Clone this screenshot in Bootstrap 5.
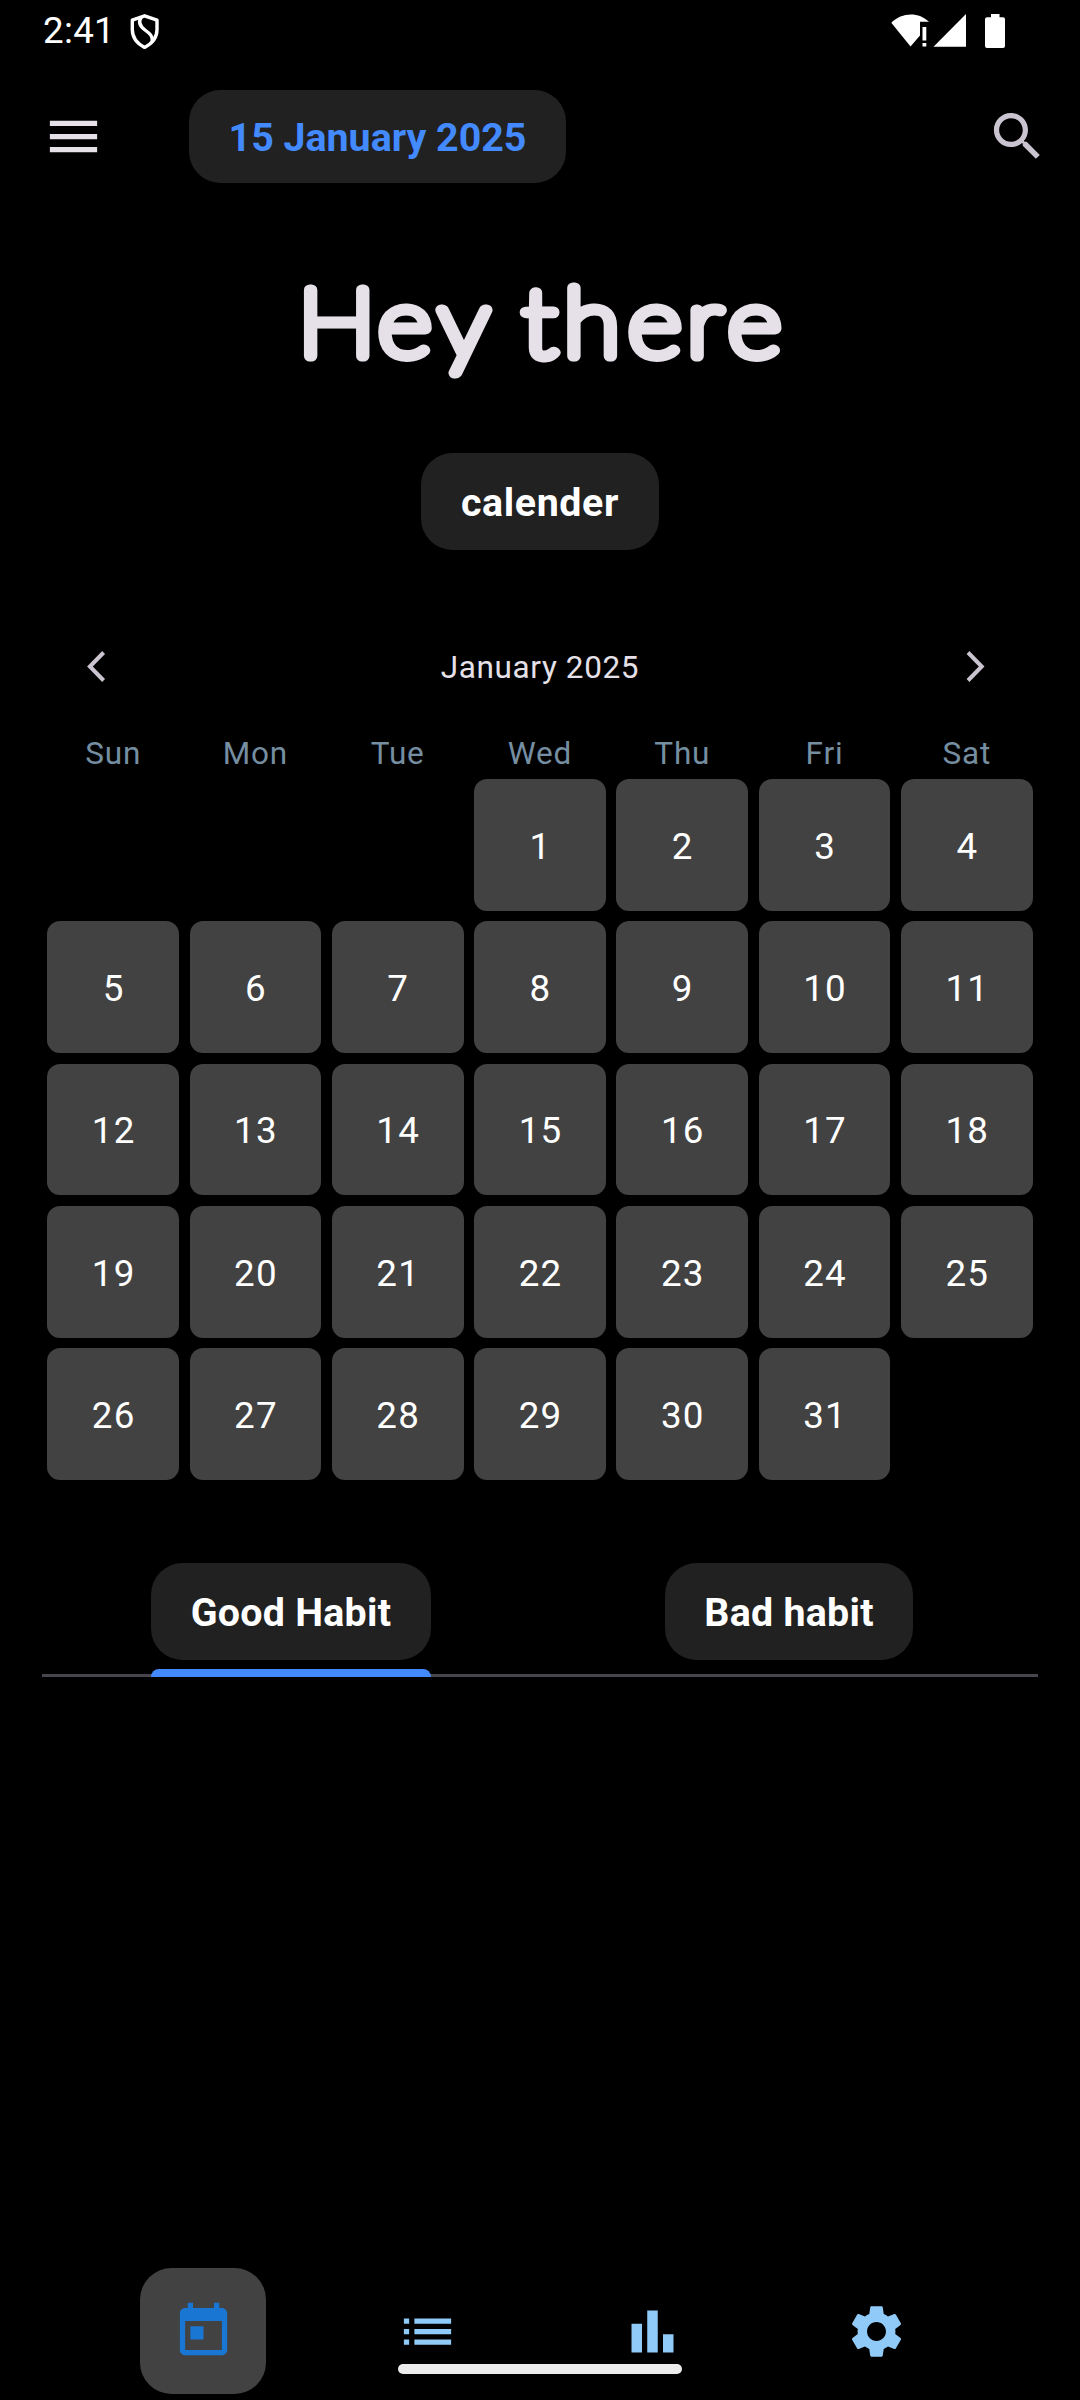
<!DOCTYPE html>
<html lang="en" data-bs-theme="dark">
<head>
<meta charset="utf-8">
<meta name="viewport" content="width=device-width, initial-scale=1">
<title>Habits</title>
<link href="https://cdn.jsdelivr.net/npm/bootstrap@5.3.0/dist/css/bootstrap.min.css" rel="stylesheet">
<style>
  html, body { margin: 0; background: #000; }
  body { font-family: Roboto, "Liberation Sans", sans-serif; color: #e6e0e9; line-height: 1.172; }
  svg { display: block; flex: none; }
  .screen { width: 1080px; height: 2400px; overflow: hidden; background: #000; }
  .statusbar { height: 74px; padding: 14px 75px 0 43px; }
  .clock { font-size: 36.75px; line-height: 36px; color: #fff; width: 86px; margin-top: -1px; letter-spacing: .3px; }
  .appbar { height: 126px; padding: 0 31.5px 0 42px; }
  .chip { background: #212121; color: #fff; border-radius: 31.5px; font-weight: 700; font-size: 39.375px; line-height: 46px; border: 0; padding: 3px 0 0; height: 97px; letter-spacing: .26px; white-space: nowrap; }
  .chip-date { width: 377px; height: 93px; color: #448aff; margin-left: 84px; letter-spacing: 0; padding-top: 2px; }
  .hello { height: 160px; margin-top: 54px; }
  .hello text { font-family: Lato, sans-serif; font-weight: 100; font-size: 94px; fill: #e6e0e9; stroke: #e6e0e9; stroke-width: 11px; stroke-linejoin: round; stroke-linecap: round; }
  .chip-cal { width: 237.4px; margin-top: 40px; letter-spacing: .6px; }
  .cal { padding: 0 42px; margin-top: 52px; }
  .monthbar { height: 126px; padding: 0 31.5px; }
  .monthname { font-size: 31.5px; letter-spacing: .62px; padding-top: 7px; }
  .seven { display: grid; grid-template-columns: repeat(7, 1fr); }
  .weekday { color: #758ea1; font-size: 31.5px; line-height: 37px; height: 45.5px; padding-top: 7px; letter-spacing: .85px; text-align: center; }
  .day { height: 142.2857px; padding: 5.25px; }
  .day > span { height: 100%; border-radius: 13.125px; background: #424242; color: #fff; font-size: 36.75px; letter-spacing: 1.2px; padding: 2.5px 0 0 1px; display: flex; align-items: center; justify-content: center; }
  .habit-tabs { margin: 77.5px 42px 0; height: 114.5px; border-bottom: 3px solid #49454f; }
  .habit-tab { width: 498px; position: relative; }
  .habit-tab.active::after { content: ""; position: absolute; left: 109px; width: 280px; top: 106.3px; height: 8.2px; background: #448aff; border-radius: 7.875px 7.875px 0 0; }
  .bottombar { height: 132px; margin-top: 590.8px; padding-left: 140.2px; gap: 98.1px; position: relative; color: #90caf9; }
  .bottom-item { width: 126.3px; height: 126.3px; }
  .bottom-item.active { background: #424242; color: #1976d2; border-radius: 31.5px; }
  .homepill { position: absolute; left: 398px; top: 96px; width: 284px; height: 10px; border-radius: 5px; background: #ececec; }
</style>
</head>
<body>
<div class="screen d-flex flex-column">
  <div class="statusbar d-flex align-items-start">
    <span class="clock">2:41</span>
    <svg width="31" height="36" viewBox="0 0 31 36" fill="none" stroke="#fff" stroke-width="3.4" stroke-linejoin="round"><path d="M15.600 1.800 3.300 6.200V15.500C3.300 24 8 29.500 15.600 33.400 23.200 29.500 28 24 28 15.500V6.200Z"/><path d="M12.300 3C9 8 10.500 12 16 16S23.500 22 23.300 27"/></svg>
    <svg class="ms-auto" width="114" height="35" viewBox="0 0 114 35" fill="#fff"><path d="M.3 8.700C11-2.200 28-2.200 38 7.800H29V21.500L19.500 32.500Z"/><path d="M31.500 13h3.800v13.500h-3.800zM31.500 29h3.800v3.600h-3.800z"/><path d="M42.500 32.700 75 0V32.700Z"/><path d="M100 0h8.500v3.300h3.500a2 2 0 0 1 2 2V32a2 2 0 0 1-2 2H96a2 2 0 0 1-2-2V5.300a2 2 0 0 1 2-2h4z"/></svg>
  </div>

  <header class="appbar d-flex align-items-center">
    <svg width="63" height="63" viewBox="0 0 24 24" fill="#e6e0e9"><path d="M3 18h18v-2H3v2zm0-5h18v-2H3v2zm0-7v2h18V6H3z"/></svg>
    <button class="chip chip-date">15 January 2025</button>
    <svg class="ms-auto" width="63" height="63" viewBox="0 0 24 24" fill="#cac4d0"><path d="M15.500 14h-.79l-.28-.27C15.410 12.590 16 11.110 16 9.500 16 5.910 13.090 3 9.500 3S3 5.910 3 9.500 5.910 16 9.500 16c1.610 0 3.090-.59 4.230-1.570l.27.28v.79l5 4.990L20.490 19l-4.990-5zm-6 0C7.010 14 5 11.990 5 9.500S7.010 5 9.500 5 14 7.010 14 9.500 11.990 14 9.500 14z"/></svg>
  </header>

  <h1 class="hello mb-0">
    <svg width="1080" height="160" viewBox="0 254 1080 160"><text transform="scale(1.1 1)" y="357.500" x="270.9 343.6 398.700 455 475 512.500 570.800 624.500 661.500">Hey there</text></svg>
  </h1>

  <button class="chip chip-cal mx-auto flex-shrink-0">calender</button>

  <section class="cal">
    <div class="monthbar d-flex align-items-center justify-content-between">
      <svg width="42" height="42" viewBox="0 0 42 42" fill="none" stroke="#cac4d0" stroke-width="4"><path d="M29.600 8.500 15.900 22.500 29.600 36.500"/></svg>
      <span class="monthname">January 2025</span>
      <svg width="42" height="42" viewBox="0 0 42 42" fill="none" stroke="#cac4d0" stroke-width="4"><path d="M3 8.500 16.700 22.500 3 36.500"/></svg>
    </div>
    <div class="seven" id="weekdays"></div>
    <div class="seven" id="days"></div>
  </section>

  <nav class="habit-tabs d-flex flex-shrink-0">
    <div class="habit-tab active d-flex justify-content-center"><button class="chip" style="width:280px">Good Habit</button></div>
    <div class="habit-tab d-flex justify-content-center"><button class="chip" style="width:248px">Bad habit</button></div>
  </nav>

  <footer class="bottombar d-flex flex-shrink-0">
    <div class="bottom-item active d-flex align-items-center justify-content-center">
      <svg width="63" height="63" viewBox="0 0 24 24" fill="currentColor"><path d="M19 3h-1V1h-2v2H8V1H6v2H5c-1.110 0-1.990.9-1.990 2L3 19c0 1.100.89 2 2 2h14c1.100 0 2-.9 2-2V5c0-1.100-.9-2-2-2zm0 16H5V8h14v11zM7 10h5v5H7z"/></svg>
    </div>
    <div class="bottom-item d-flex align-items-center justify-content-center">
      <svg width="63" height="63" viewBox="0 0 24 24" fill="currentColor"><path d="M3 13h2v-2H3v2zm0 4h2v-2H3v2zm0-8h2V7H3v2zm4 4h14v-2H7v2zm0 4h14v-2H7v2zM7 7v2h14V7H7z"/></svg>
    </div>
    <div class="bottom-item d-flex align-items-center justify-content-center">
      <svg width="63" height="63" viewBox="0 0 24 24" fill="currentColor"><path d="M4 9h4v11H4zm12 4h4v7h-4zm-6-9h4v16h-4z"/></svg>
    </div>
    <div class="bottom-item d-flex align-items-center justify-content-center">
      <svg width="63" height="63" viewBox="0 0 24 24" fill="currentColor"><path d="M19.140 12.940c.04-.3.06-.61.06-.94 0-.32-.02-.64-.07-.94l2.030-1.580c.18-.14.23-.41.12-.61l-1.920-3.320c-.12-.22-.37-.29-.59-.22l-2.390.96c-.5-.38-1.030-.7-1.620-.94l-.36-2.540c-.04-.24-.24-.41-.48-.41h-3.840c-.24 0-.43.17-.47.41l-.36 2.540c-.59.24-1.130.57-1.620.94l-2.390-.96c-.22-.08-.47 0-.59.22L2.740 8.870c-.12.21-.08.47.12.61l2.030 1.580c-.05.3-.09.63-.09.94s.02.64.07.94l-2.030 1.580c-.18.14-.23.41-.12.61l1.920 3.320c.12.22.37.29.59.22l2.390-.96c.5.38 1.030.7 1.620.94l.36 2.540c.05.24.24.41.48.41h3.840c.24 0 .44-.17.47-.41l.36-2.540c.59-.24 1.130-.56 1.620-.94l2.390.96c.22.08.47 0 .59-.22l1.920-3.320c.12-.22.07-.47-.12-.61l-2.010-1.580zM12 15.600c-1.980 0-3.600-1.620-3.600-3.600s1.620-3.600 3.600-3.600 3.600 1.620 3.600 3.600-1.620 3.600-3.600 3.600z"/></svg>
    </div>
    <div class="homepill"></div>
  </footer>
</div>
<script src="https://cdn.jsdelivr.net/npm/bootstrap@5.3.0/dist/js/bootstrap.bundle.min.js"></script>
<script>
  document.getElementById('weekdays').innerHTML =
    ['Sun', 'Mon', 'Tue', 'Wed', 'Thu', 'Fri', 'Sat'].map(d => `<div class="weekday">${d}</div>`).join('');
  // January 2025 begins on a Wednesday: three empty slots come first.
  document.getElementById('days').innerHTML =
    '<div class="day"></div>'.repeat(3) +
    Array.from({ length: 31 }, (_, i) => `<div class="day"><span>${i + 1}</span></div>`).join('');
</script>
</body>
</html>
